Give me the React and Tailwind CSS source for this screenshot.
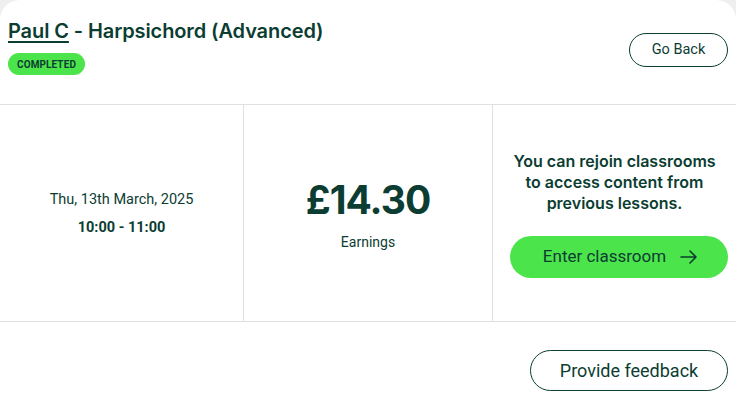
import React from "react";

export default function App() {
  const dark = "text-[#0b3d32]";
  return (
    <div className="min-h-[407px] w-[736px] bg-[#efefef] font-['Roboto',sans-serif]">
      <div className="rounded-t-[20px] bg-white">
        {/* Header */}
        <div className="flex h-[105px] items-start justify-between border-b border-[#e0e0e0] pl-2 pr-2">
          <div className="pt-[17px]">
            <h1 className={`font-['Inter',sans-serif] text-[20px] font-semibold leading-7 tracking-[-0.1px] ${dark}`}>
              <span className="underline decoration-[2px] underline-offset-[3px]">Paul C</span> - Harpsichord (Advanced)
            </h1>
            <span className="mt-2 inline-flex h-[22px] items-center rounded-full bg-[#4ce44b] px-[9px] font-['Roboto',sans-serif] text-[10px] font-bold tracking-[0.1px] text-[#0b3d32]">
              COMPLETED
            </span>
          </div>
          <button className={`mt-[33px] h-[34px] w-[99px] rounded-full border border-[#0b3d32] text-[14.5px] ${dark}`}>
            Go Back
          </button>
        </div>

        {/* Middle */}
        <div className="grid h-[217px] grid-cols-[244px_249px_1fr] border-b border-[#e0e0e0]">
          <div className={`flex flex-col items-center justify-center border-r border-[#e0e0e0] pt-[2px] ${dark}`}>
            <div className="text-[14.5px] leading-5">Thu, 13th March, 2025</div>
            <div className="mt-2 text-[14.5px] font-bold leading-5">10:00 - 11:00</div>
          </div>
          <div className={`flex flex-col items-center justify-center border-r border-[#e0e0e0] pt-[4px] ${dark}`}>
            <div className="font-['Inter',sans-serif] text-[39px] font-bold leading-[44px] tracking-[-1px]">£14.30</div>
            <div className="mt-[10px] text-[14px] leading-5">Earnings</div>
          </div>
          <div className={`flex flex-col items-center justify-center pt-[2px] ${dark}`}>
            <p className="text-center font-['Inter',sans-serif] text-[16px] font-semibold leading-[21px]">
              You can rejoin classrooms
              <br />
              to access content from
              <br />
              previous lessons.
            </p>
            <button className="ml-4 mr-2 mt-[22px] flex h-[42px] w-[218px] items-center justify-center gap-[14px] rounded-full bg-[#4ce44b] pl-1 text-[17px]">
              <span>Enter classroom</span>
              <svg width="18" height="14" viewBox="0 0 18 14" fill="none" stroke="#0b3d32" strokeWidth="1.6" strokeLinecap="round" strokeLinejoin="round">
                <path d="M1 7h15M10 1l6 6-6 6" />
              </svg>
            </button>
          </div>
        </div>

        {/* Footer */}
        <div className="flex h-[85px] items-start justify-end pr-2 pt-[28px]">
          <button className={`h-[41px] w-[198px] rounded-full border border-[#0b3d32] text-[18px] ${dark}`}>
            Provide feedback
          </button>
        </div>
      </div>
    </div>
  );
}
